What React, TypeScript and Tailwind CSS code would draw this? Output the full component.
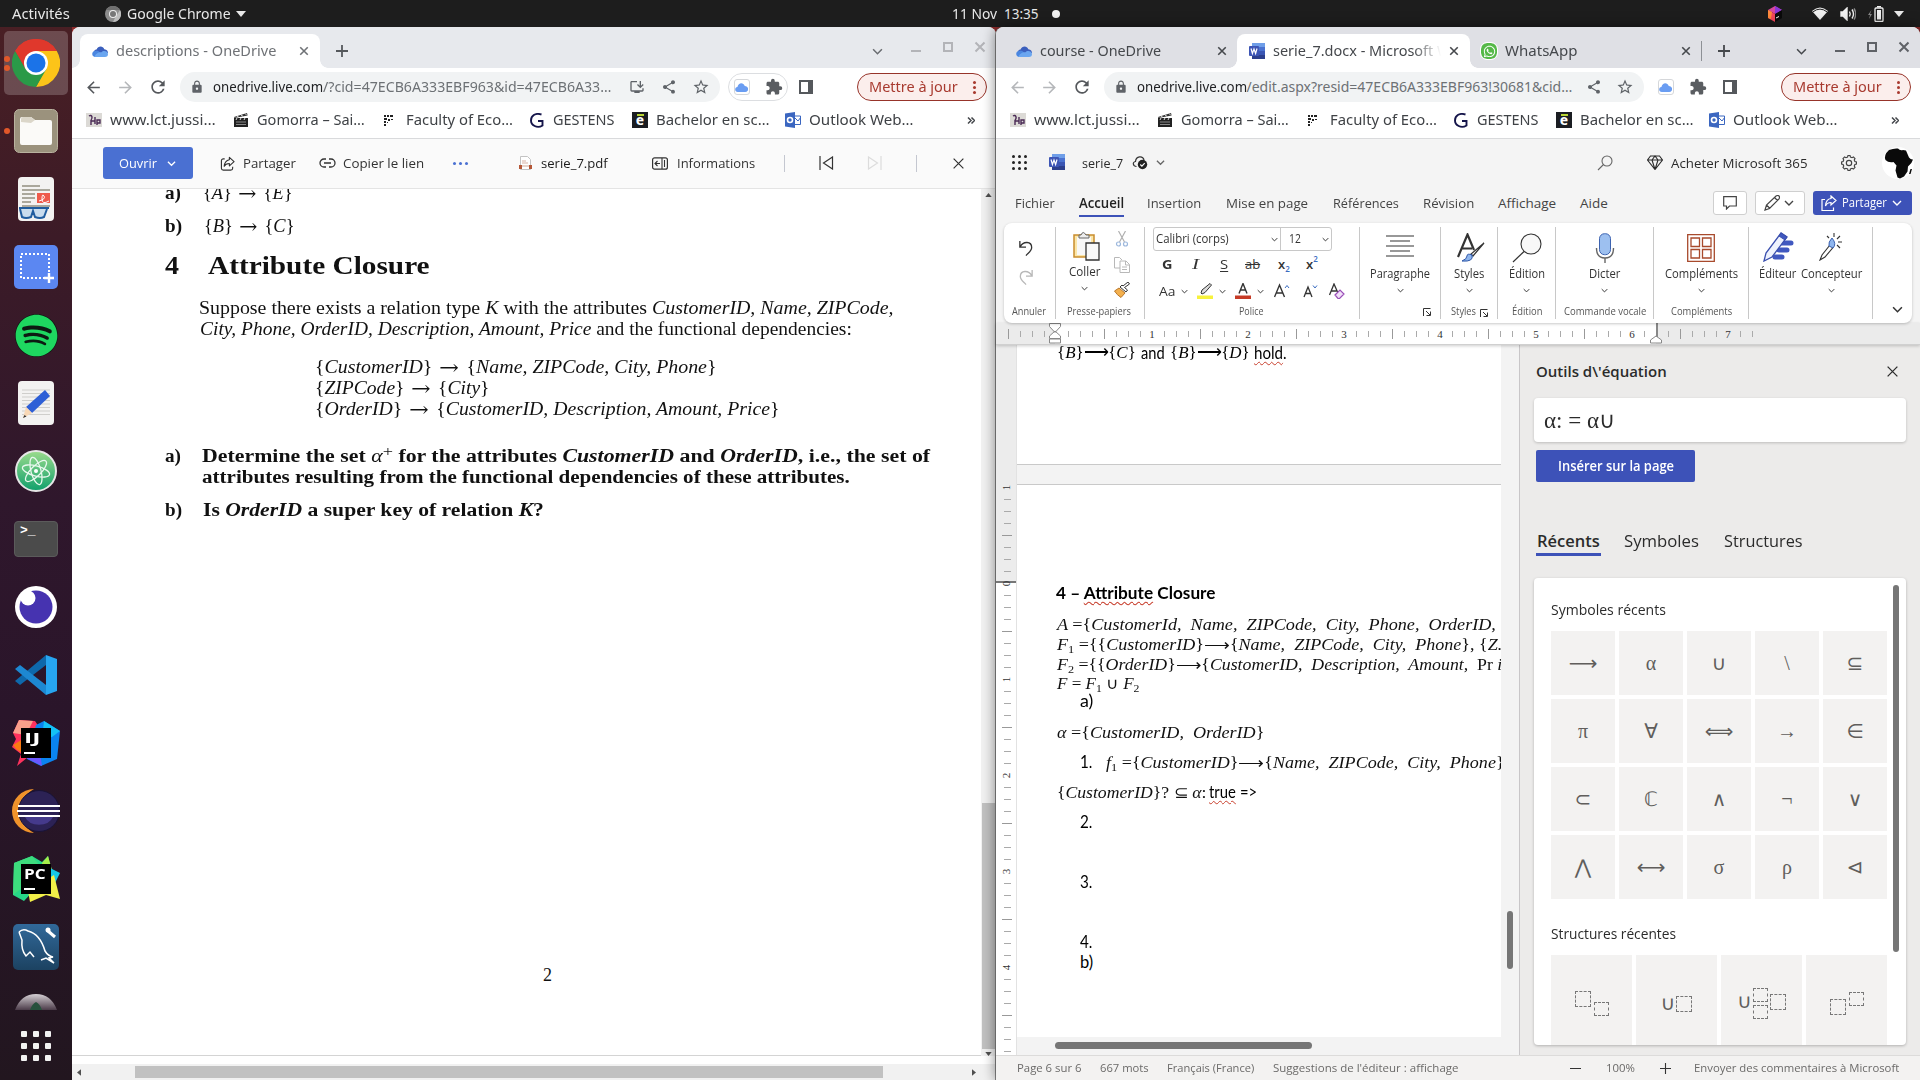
import { useLayoutEffect, useRef } from "react";
import type { ReactNode } from "react";
import {
  MdArrowBack,
  MdArrowForward,
  MdExtension,
  MdLock,
  MdOutlineInstallDesktop,
  MdRefresh,
  MdShare,
  MdStarBorder,
} from "react-icons/md";
import { FaWhatsapp, FaSpotify } from "react-icons/fa";

/* Text that is stretched horizontally to fill the width given by its class. */
function Fit({ className = "", children }: { className?: string; children: ReactNode }) {
  const outer = useRef<HTMLSpanElement>(null);
  const inner = useRef<HTMLSpanElement>(null);
  useLayoutEffect(() => {
    if (!outer.current || !inner.current) return;
    const scale = outer.current.clientWidth / inner.current.offsetWidth;
    inner.current.style.transform = `scaleX(${scale})`;
  });
  return (
    <span ref={outer} className={`block shrink-0 whitespace-pre ${className}`}>
      <span ref={inner} className="inline-block origin-left align-top">
        {children}
      </span>
    </span>
  );
}

function Svg({ box, className, children }: { box: string; className: string; children: ReactNode }) {
  return (
    <svg viewBox={box} className={`block shrink-0 ${className}`} fill="none" stroke="currentColor">
      {children}
    </svg>
  );
}

const Chevron = ({ className = "" }: { className?: string }) => (
  <Svg box="0 0 10 10" className={className}>
    <path d="M1 3l4 4 4-4" strokeWidth="1.4" />
  </Svg>
);
const Cross = ({ className = "", sw = 1.6 }: { className?: string; sw?: number }) => (
  <Svg box="0 0 12 12" className={className}>
    <path d="M1.5 1.5l9 9M10.5 1.5l-9 9" strokeWidth={sw} />
  </Svg>
);
const Plus = ({ className = "", sw = 1.8 }: { className?: string; sw?: number }) => (
  <Svg box="0 0 12 12" className={className}>
    <path d="M6 0v12M0 6h12" strokeWidth={sw} />
  </Svg>
);
const Cloud = ({ className = "" }: { className?: string }) => (
  <svg viewBox="0 0 16 11" className={`block shrink-0 ${className}`}>
    <path d="M4 9C1 8 1 4 4.500 3.500 6-.5 11-.7 12.300 3.200 15 3.500 16 5 16 7L8 9z" fill="#3b5fbd" />
    <path d="M3.500 11C-.5 11-1 5.500 3 5c2-.5 3 0 5 1.200L3.500 11z" fill="#4a86e0" />
    <path d="M2.500 11C3 8 6.500 5.800 9.500 6.200 11 4 15.900 4.800 16 8c0 2-1 3-3 3z" fill="#6aa6f0" />
  </svg>
);
const WordIcon = () => (
  <svg viewBox="0 0 16 16" className="block h-4 w-4 shrink-0">
    <path d="M3 0h13v4H3z" fill="#6f9ee8" />
    <path d="M3 4h13v4H3z" fill="#4a72d0" />
    <path d="M3 8h13v4H3z" fill="#3a56b4" />
    <path d="M3 12h13v4H3z" fill="#2c3f8c" />
    <rect y="3" width="10" height="10" rx="1" fill="#3d55b5" />
    <path d="M2 5.500l1.400 5L5 6l1.600 4.500L8 5.500" stroke="#fff" strokeWidth="1.200" fill="none" />
  </svg>
);

/* ───────── Desktop top bar ───────── */
function TopBar() {
  return (
    <div className="flex h-[27px] shrink-0 items-center bg-[#1d1d1d] font-['Noto_Sans',sans-serif] text-[13.5px] leading-5 text-[#e8e8e8]">
      <Fit className="ml-[12px] w-[58px]">Activités</Fit>
      <svg viewBox="0 0 16 16" className="ml-[35px] h-4 w-4">
        <circle cx="8" cy="8" r="8" fill="#8d8d8d" />
        <path d="M1 4a8 8 0 0 1 14 0H8z" fill="#6f6f6f" />
        <path d="M15 4a8 8 0 0 1-7 12l3-6z" fill="#bdbdbd" />
        <circle cx="8" cy="8" r="4" fill="#eee" />
        <circle cx="8" cy="8" r="3" fill="#777" />
      </svg>
      <Fit className="ml-[6px] w-[104px]">Google Chrome</Fit>
      <svg viewBox="0 0 10 6" className="ml-[5px] h-[6px] w-[10px]" fill="#e8e8e8"><path d="M0 0h10L5 6z" /></svg>
      <Fit className="ml-[706px] w-[45px]">11 Nov</Fit>
      <Fit className="ml-[7px] w-[35px]">13:35</Fit>
      <span className="ml-[13px] h-2 w-2 rounded-full bg-[#f2f2f2]" />
      <svg viewBox="0 0 14 16" className="ml-[708px] h-4 w-[14px]">
        <path d="M7 0L0 4l7 4 7-4z" fill="#d8479c" />
        <path d="M0 4v8l7 4V8z" fill="#f5465b" />
        <path d="M0 4l4 2-1 7-3-1z" fill="#ff8a3c" />
        <path d="M7 0l7 4-7 4z" fill="#8a36d8" />
        <path d="M7 8l7-4v8l-7 4z" fill="#0a0a0a" />
        <path d="M8 12l3-1.500" stroke="#fff" />
      </svg>
      <svg viewBox="0 0 16 13" className="ml-[30px] h-[13px] w-4">
        <path d="M0 4Q8-3 16 4L8 13z" fill="#f0f0f0" />
        <path d="M.8 5Q8-.8 15.200 5" stroke="#1d1d1d" fill="none" strokeWidth="1" />
      </svg>
      <svg viewBox="0 0 16 14" className="ml-[12px] h-[14px] w-4" fill="none" stroke="#f0f0f0" strokeWidth="1.400">
        <path d="M1 5h2l4-4v12L3 9H1z" fill="#f0f0f0" />
        <path d="M9.500 4.500q1.500 2.500 0 5M12 2.500q3 4.500 0 9" />
        <path d="M14 1.500q3.500 5.500 0 11" stroke="#888" />
      </svg>
      <svg viewBox="0 0 16 16" className="ml-[12px] h-4 w-4">
        <path d="M3.500 4L0 9h2l-1 4 3-5H2z" fill="#888" />
        <rect x="7" y="2" width="8" height="13.500" rx="1" fill="none" stroke="#f0f0f0" strokeWidth="1.300" />
        <rect x="9" y="4" width="4" height="9.500" fill="#f0f0f0" />
        <path d="M9 .7h4" stroke="#f0f0f0" strokeWidth="1.400" />
      </svg>
      <svg viewBox="0 0 10 6" className="ml-[10px] h-[6px] w-[10px]" fill="#e8e8e8"><path d="M0 0h10L5 6z" /></svg>
    </div>
  );
}

/* ───────── Dock ───────── */
function Slot({ children, dots = 0, active = false }: { children: ReactNode; dots?: number; active?: boolean }) {
  return (
    <div className="relative flex h-[68px] w-[72px] shrink-0 items-center justify-center">
      {active && <span className="absolute inset-x-[4px] inset-y-[2px] rounded-[5px] bg-white/20" />}
      <div className="absolute left-[4px] flex flex-col gap-[3px]">
        {Array.from({ length: dots }, (_, i) => (
          <span key={i} className="h-[6px] w-[6px] rounded-full bg-[#e2582a]" />
        ))}
      </div>
      <div className="relative">{children}</div>
    </div>
  );
}

function JetBrains({ code, pc }: { code: string; pc?: boolean }) {
  return (
    <div className="relative flex h-[48px] w-[48px] items-center justify-center">
      {pc ? (
        <svg viewBox="0 0 48 48" className="absolute inset-0">
          <path d="M2 8L20 1l10 6 6-6 4 16-14 14L12 46 1 40z" fill="#27d787" />
          <path d="M2 8L20 1l8 10-18 22L1 40z" fill="#3ddc7d" />
          <path d="M30 8l6-7 4 14-8 6z" fill="#a6ee4a" />
          <path d="M36 12l12 6-6 12-6-4z" fill="#16c8e8" />
          <path d="M16 36l26-16 6 24-14-4-16 7z" fill="#f2f048" />
        </svg>
      ) : (
        <svg viewBox="0 0 48 48" className="absolute inset-0">
          <path d="M7 1l16 1 8 12-10 20L5 47l4-12-9-7 4-8-3-6z" fill="#fe315d" />
          <path d="M7 1l14 1-7 14-13-2z" fill="#f9a08b" />
          <path d="M1 26l10-6 2 16-9-6z" fill="#f97a12" />
          <path d="M24 6l8-4 16 10-3 28-16 7-14-7z" fill="#0a84f0" />
          <path d="M32 2l16 10-8 6-10 2z" fill="#14c2f5" />
          <path d="M12 38l16-4 2 13z" fill="#6b57ff" />
        </svg>
      )}
      <div className="relative flex h-[30px] w-[30px] flex-col justify-between bg-black px-[3px] pb-[4px] pt-[3px]">
        <Fit className={`font-['Open_Sans',sans-serif] text-[14px] font-bold leading-[14px] text-white ${pc ? "w-[22px]" : "w-[16px]"}`}>{code}</Fit>
        <span className="h-[2px] w-[11px] bg-white" />
      </div>
    </div>
  );
}

function Dock() {
  return (
    <div className="flex w-[72px] shrink-0 flex-col overflow-hidden bg-[linear-gradient(180deg,#491f24_0%,#3c1b27_20%,#2f172c_45%,#2a152a_65%,#22161f_100%)] pt-[2px]">
      <Slot active dots={2}>
        <svg viewBox="0 0 48 48" className="h-12 w-12">
          <path d="M24 24L3.200 12A24 24 0 0 1 44.800 12z" fill="#e0382c" />
          <path d="M24 12h20.800A24 24 0 0 1 24 48L34 29z" fill="#fcc419" />
          <path d="M3.200 12A24 24 0 0 0 24 48l10.400-18L24 24 13.600 30z" fill="#2a9a48" />
          <path d="M24 12h20.800A24 24 0 0 0 3.200 12L13.600 30 14 18z" fill="#e0382c" />
          <circle cx="24" cy="24" r="12" fill="#fff" />
          <circle cx="24" cy="24" r="9.500" fill="#1b73e8" />
        </svg>
      </Slot>
      <Slot dots={1}>
        <svg viewBox="0 0 44 44" className="h-11 w-11">
          <rect x=".5" y=".5" width="43" height="43" rx="5" fill="#9b927d" stroke="#b9b29f" />
          <path d="M6 34V10q0-2 2-2h9l4 3h15q2 0 2 2v21q0 2-2 2H8q-2 0-2-2z" fill="#fbfaf8" />
          <path d="M7 13v-3q0-2 2-2h8l4 3-4 3z" fill="#dbd6c9" />
        </svg>
      </Slot>
      <Slot>
        <svg viewBox="0 0 36 44" className="h-11 w-9">
          <rect width="36" height="44" rx="4" fill="#f3f2f1" />
          <path d="M4 9h18M4 13h28M4 17h13M4 21h13M4 25h9M4 29h28" stroke="#aaa79c" strokeWidth="2" />
          <rect x="19" y="16" width="13" height="10" fill="#ee5a4c" />
          <path d="M21 24q7-2 5-5t-2 3 7 2" stroke="#fff" fill="none" />
          <path d="M1 31h30M2 32l2 8q4 2 9 0l2-6 2 6q5 2 9 0l3-8" stroke="#1f5c9e" strokeWidth="2" fill="#c9dced" />
        </svg>
      </Slot>
      <Slot>
        <svg viewBox="0 0 44 44" className="h-11 w-11">
          <rect width="44" height="44" rx="5" fill="#5b87f2" />
          <rect x="7" y="9" width="28" height="24" fill="none" stroke="#fff" strokeWidth="2" strokeDasharray="2 2" />
          <path d="M35 28v10M30 33h10" stroke="#fff" strokeWidth="2.400" />
        </svg>
      </Slot>
      <Slot>
        <div className="rounded-full bg-[#0d1a12]"><FaSpotify className="h-[43px] w-[43px] text-[#1ed760]" /></div>
      </Slot>
      <Slot>
        <svg viewBox="0 0 36 44" className="h-11 w-9">
          <rect width="36" height="44" rx="4" fill="#f3f2f1" />
          <path d="M4 9h28M4 12.500h28M4 16h28M4 19.500h28M4 23h28M4 26.500h28M4 30h28M4 33.500h28" stroke="#cfcecb" />
          <path d="M27 9l5 6-18 17-6-6z" fill="#2e5fd6" />
          <path d="M8 26l6 6-9 5z" fill="#f8d7b5" />
          <path d="M5 37l1.500-3 2 1.500z" fill="#333" />
        </svg>
      </Slot>
      <Slot>
        <svg viewBox="0 0 44 44" className="h-[44px] w-[44px]">
          <defs><linearGradient id="atom" x2="0" y2="1"><stop stopColor="#9bdc8c" /><stop offset="1" stopColor="#10a06c" /></linearGradient></defs>
          <circle cx="22" cy="22" r="20" fill="url(#atom)" stroke="#e6e6e6" strokeWidth="2" />
          <g fill="none" stroke="#e9f8ee" strokeWidth="1.300">
            <ellipse cx="22" cy="22" rx="14" ry="5" transform="rotate(15 22 22)" />
            <ellipse cx="22" cy="22" rx="14" ry="5" transform="rotate(75 22 22)" />
            <ellipse cx="22" cy="22" rx="14" ry="5" transform="rotate(-45 22 22)" />
          </g>
          <circle cx="22" cy="22" r="2" fill="#fff" />
        </svg>
      </Slot>
      <Slot>
        <div className="h-9 w-11 rounded-[4px] border border-[#5b5b5b] bg-[#4b4b4b] pl-[5px] font-['Liberation_Mono',monospace] text-[13px] font-bold leading-[17px] text-white">{">_"}</div>
      </Slot>
      <Slot>
        <svg viewBox="0 0 42 42" className="h-[42px] w-[42px]">
          <circle cx="21" cy="21" r="21" fill="#fff" />
          <circle cx="21" cy="21" r="16.500" fill="#4633b0" />
          <circle cx="13" cy="12" r="7.500" fill="#fff" />
        </svg>
      </Slot>
      <Slot>
        <svg viewBox="0 0 42 42" className="h-[42px] w-[42px]">
          <path d="M0 27l31-26v10L5 31z" fill="#0e68ab" />
          <path d="M0 15l5-4 26 20v10z" fill="#1d88d2" />
          <path d="M31 1l11 4v32l-11 4z" fill="#27a5f0" />
        </svg>
      </Slot>
      <Slot><JetBrains code="IJ" /></Slot>
      <Slot>
        <svg viewBox="0 0 48 44" className="h-11 w-12">
          <path d="M22 0A22 22 0 0 0 22 44Q8 36 8 22T22 0z" fill="#f0932b" />
          <circle cx="27" cy="22" r="20.500" fill="#2c2255" stroke="#191336" />
          <path d="M13 28a15 12 0 0 0 28 0z" fill="#453a8c" />
          <path d="M6 17h42M5 22h43M6 27h42" stroke="#fff" strokeWidth="2.200" />
        </svg>
      </Slot>
      <Slot><JetBrains code="PC" pc /></Slot>
      <Slot>
        <svg viewBox="0 0 46 46" className="h-[46px] w-[46px]">
          <defs><linearGradient id="dolphin" x2="0" y2="1"><stop stopColor="#31699a" /><stop offset="1" stopColor="#1c4261" /></linearGradient></defs>
          <rect width="46" height="46" rx="5" fill="url(#dolphin)" />
          <path d="M6 8q4-4 9-1 12 3 17 20 3 5 8 6l-4 1 5 5-8-5-5 2M21 33l-4-5-4 4Q8 26 9 16L6 8" fill="none" stroke="#fff" strokeWidth="1.500" />
          <path d="M35 7l7 6" stroke="#fff" strokeWidth="3" />
          <circle cx="35" cy="6" r="2.500" fill="#fff" />
        </svg>
      </Slot>
      <div className="mt-[13px] flex h-[16px] justify-center overflow-hidden">
        <svg viewBox="0 0 42 16" className="h-4 w-[42px]">
          <defs><linearGradient id="fade" x2="0" y2="1"><stop stopColor="#d5d0d4" /><stop offset="1" stopColor="#4b3b49" /></linearGradient></defs>
          <path d="M0 16Q6 0 21 0t21 16z" fill="url(#fade)" />
          <path d="M15 16q2-6 6-8 4 2 6 8z" fill="#27513d" />
        </svg>
      </div>
      <div className="mt-[21px] grid grid-cols-[6px_6px_6px] justify-center gap-[6px]">
        {Array.from({ length: 9 }, (_, i) => <span key={i} className="h-[6px] w-[6px] rounded-[1px] bg-[#f2f2f2]" />)}
      </div>
    </div>
  );
}

/* ───────── Browser chrome ───────── */
function Flare() {
  return (
    <>
      <span className="absolute -left-2 bottom-0 h-2 w-2 bg-[radial-gradient(circle_at_0_0,transparent_7.5px,white_8px)]" />
      <span className="absolute -right-2 bottom-0 h-2 w-2 bg-[radial-gradient(circle_at_100%_0,transparent_7.5px,white_8px)]" />
    </>
  );
}

function WinButtons() {
  return (
    <>
      <span className="h-[2px] w-[10px] shrink-0 bg-current" />
      <span className="mb-[8px] ml-[22px] h-[10px] w-[10px] shrink-0 border-2 border-current" />
      <Cross className="mb-[8px] ml-[21px] h-[12px] w-[12px]" sw={2} />
    </>
  );
}

function CloudBadge() {
  return (
    <span className="flex h-4 w-4 shrink-0 items-center justify-center rounded-[3px] border border-[#d5d7da] bg-white">
      <svg viewBox="0 0 16 11" className="h-[9px] w-[13px]"><path d="M3.500 11C-.5 11-1 5.500 3 5 4-.5 10-1.500 12 3.500c4 0 5 4 3.500 6q-1 1.500-3 1.500z" fill="#6a9df2" /></svg>
    </span>
  );
}

function AddressBar({ second }: { second?: boolean }) {
  return (
    <div className="flex h-[38px] shrink-0 items-center bg-white font-['Noto_Sans',sans-serif] text-[14px] leading-5">
      <MdArrowBack className={`ml-[12px] h-[19px] w-[19px] shrink-0 ${second ? "text-[#b5b7ba]" : "text-[#55585c]"}`} />
      <MdArrowForward className="ml-[13px] h-[19px] w-[19px] shrink-0 text-[#b5b7ba]" />
      <MdRefresh className="ml-[12.5px] h-[20px] w-[20px] shrink-0 text-[#55585c]" />
      <div className="ml-[12px] flex h-[30px] w-[540px] shrink-0 items-center rounded-full bg-[#f1f3f4] text-[#5f6368]">
        <MdLock className="ml-[10px] h-[14px] w-[14px] shrink-0" />
        <Fit className="ml-[9px] w-[110px] text-[#202124]">onedrive.live.com</Fit>
        {second ? (
          <>
            <Fit className="w-[326px] text-[#6d7175]">/edit.aspx?resid=47ECB6A333EBF963!30681&cid…</Fit>
            <MdShare className="ml-[13px] h-[16px] w-[16px] shrink-0" />
            <MdStarBorder className="ml-[14px] h-[18px] w-[18px] shrink-0" />
          </>
        ) : (
          <>
            <Fit className="w-[288px] text-[#6d7175]">/?cid=47ECB6A333EBF963&id=47ECB6A33…</Fit>
            <MdOutlineInstallDesktop className="ml-[18px] h-[16px] w-[16px] shrink-0" />
            <MdShare className="ml-[16px] h-[16px] w-[16px] shrink-0" />
            <MdStarBorder className="ml-[15px] h-[18px] w-[18px] shrink-0" />
          </>
        )}
      </div>
      {second ? (
        <div className="ml-[14px] flex h-[28px] w-[54px] shrink-0 items-center gap-[15px]">
          <CloudBadge />
          <MdExtension className="h-[18px] w-[18px] text-[#5a5d61]" />
        </div>
      ) : (
        <div className="ml-[8px] flex h-[28px] w-[60px] shrink-0 items-center gap-[15px] rounded-full border border-[#dcdee1] pl-[5px]">
          <CloudBadge />
          <MdExtension className="h-[18px] w-[18px] text-[#5a5d61]" />
        </div>
      )}
      <span className="ml-[11px] h-[14px] w-[14px] shrink-0 border-2 border-r-[5px] border-[#55585c]" />
      <div className="ml-[44px] flex h-[28px] w-[130px] shrink-0 items-center rounded-full border border-[#97342a] bg-[#fbeeec] text-[#a83a2f]">
        <Fit className="ml-[11px] w-[89px]">Mettre à jour</Fit>
        <div className="ml-[15px] flex flex-col gap-[2px]">
          <span className="h-[3px] w-[3px] rounded-full bg-current" />
          <span className="h-[3px] w-[3px] rounded-full bg-current" />
          <span className="h-[3px] w-[3px] rounded-full bg-current" />
        </div>
      </div>
    </div>
  );
}

function Bookmarks() {
  return (
    <div className="flex h-[33px] shrink-0 items-center border-b border-[#d9dadc] bg-white pb-[4px] font-['Noto_Sans',sans-serif] text-[14px] leading-5 text-[#3f4246]">
      <Svg box="0 0 16 14" className="ml-[14px] h-[14px] w-4 bg-[#dcdad6] text-[#4a2a55]">
        <path d="M3 3c3-2 4 2 2 4M5 7v5M5 8h4M9 4v7M11 12V7h3v3h-3" strokeWidth="1.400" />
      </Svg>
      <Fit className="ml-[8px] w-[106px]">www.lct.jussi…</Fit>
      <svg viewBox="0 0 16 16" className="ml-[17px] h-4 w-4 shrink-0">
        <path d="M1 6h14v9H1z" fill="#222" />
        <path d="M1 5l13-4 .6 2.500L1.500 6z" fill="#333" />
        <path d="M4 4l2 1.500M8 3l2 1.300M12 1.500l1.500 1.500M4 6l-1 2M8 6L7 8M12 6l-1 2" stroke="#ddd" />
        <path d="M3 10h10M3 12.500h10" stroke="#888" />
      </svg>
      <Fit className="ml-[8px] w-[108px]">Gomorra – Sai…</Fit>
      <svg viewBox="0 0 10 11" className="ml-[19px] h-[11px] w-[10px] shrink-0" fill="#222">
        <path d="M0 0h2v2H0zM3 0h2v2H3zM6 0h3v2H6zM0 3h3v2H0zM4 4h2v2H4zM7 4h2v1H7zM0 6h2v2H0zM3 7h1v1H3zM0 9h2v2H0z" />
      </svg>
      <Fit className="ml-[12px] w-[107px]">Faculty of Eco…</Fit>
      <Svg box="0 0 14 15" className="ml-[17px] h-[15px] w-[14px] text-[#15154a]">
        <path d="M11.500 1.500C5-.5 1 3 1 7.500s6 8.500 11.500 5V8H8" strokeWidth="1.900" />
      </Svg>
      <Fit className="ml-[9px] w-[62px]">GESTENS</Fit>
      <span className="relative ml-[17px] flex h-4 w-4 shrink-0 items-center justify-center bg-[#1b1d22] text-[14px] font-bold leading-none text-white">
        <span className="absolute top-[2px] h-[2px] w-[7px] bg-[#b8d432]" />
        e
      </span>
      <Fit className="ml-[8px] w-[113px]">Bachelor en sc…</Fit>
      <svg viewBox="0 0 16 16" className="ml-[16px] h-4 w-4 shrink-0">
        <path d="M0 1.500L10 0v16L0 14.500z" fill="#3b66c0" />
        <path d="M10 4h5.500v8.500H10M10 6l3 3 3-4" fill="none" stroke="#3b66c0" />
        <circle cx="5" cy="8" r="2.500" fill="none" stroke="#fff" strokeWidth="1.600" />
      </svg>
      <Fit className="ml-[8px] w-[105px]">Outlook Web…</Fit>
      <Svg box="0 0 8 7" className="ml-[53px] h-[7px] w-[8px] text-[#44474b]">
        <path d="M1 .5l3 3-3 3M4.500.5l3 3-3 3" strokeWidth="1.500" />
      </Svg>
    </div>
  );
}

/* ───────── Left window: PDF viewer ───────── */
const To = () => <span className="font-['DejaVu_Math_TeX_Gyre','DejaVu_Serif',serif] text-[19px] leading-none"> → </span>;

function PdfWindow() {
  return (
    <div className="flex w-[924px] shrink-0 flex-col overflow-hidden rounded-t-[8px] bg-white">
      <div className="flex h-[41px] shrink-0 items-center bg-[#e7e9ed] pt-[7px] font-['Noto_Sans',sans-serif] text-[14px] leading-5">
        <div className="relative ml-[8px] flex h-[34px] w-[240px] shrink-0 items-center rounded-t-[8px] bg-white text-[#6f7276]">
          <Flare />
          <Cloud className="ml-[12px] h-[11px] w-4" />
          <Fit className="ml-[8px] w-[160px]">descriptions - OneDrive</Fit>
          <Cross className="ml-[23px] h-[10px] w-[10px]" sw={1.9} />
        </div>
        <Plus className="ml-[16px] h-[12px] w-[12px] text-[#55585c]" />
        <Chevron className="ml-[524px] h-[11px] w-[11px] text-[#6a6d71]" />
        <div className="ml-[28px] flex items-center text-[#b3b4b8]"><WinButtons /></div>
      </div>
      <AddressBar />
      <Bookmarks />
      <div className="flex h-[50px] shrink-0 items-center border-b border-[#e4e4e4] bg-[#fafafa] pb-px font-['Open_Sans',sans-serif] text-[13.5px] leading-5 text-[#333]">
        <div className="ml-[31px] flex h-8 w-[90px] shrink-0 items-center rounded-[3px] bg-[#4a70d2] text-white">
          <Fit className="ml-[16px] w-[38px]">Ouvrir</Fit>
          <Chevron className="ml-[10px] h-[9px] w-[9px]" />
        </div>
        <Svg box="0 0 16 16" className="ml-[27px] h-[15px] w-[15px]">
          <path d="M5 3H3.500A2 2 0 0 0 1.500 5v8a2 2 0 0 0 2 2h8a2 2 0 0 0 2-2v-1.500M10 1.500l5 4.500-5 4.500V8Q6 8 4.500 11 5 5 10 4z" strokeWidth="1.200" strokeLinejoin="round" />
        </Svg>
        <Fit className="ml-[8px] w-[53px]">Partager</Fit>
        <Svg box="0 0 17 10" className="ml-[23px] h-[10px] w-[17px]">
          <path d="M7 1H5a4 4 0 0 0 0 8h2M10 1h2a4 4 0 0 1 0 8h-2M5 5h7" strokeWidth="1.300" />
        </Svg>
        <Fit className="ml-[7px] w-[81px]">Copier le lien</Fit>
        <div className="ml-[29px] flex gap-[3px]">
          <span className="h-[3px] w-[3px] rounded-full bg-[#4a70d2]" />
          <span className="h-[3px] w-[3px] rounded-full bg-[#4a70d2]" />
          <span className="h-[3px] w-[3px] rounded-full bg-[#4a70d2]" />
        </div>
        <svg viewBox="0 0 13 14" className="ml-[51px] h-[14px] w-[13px] shrink-0">
          <path d="M1.500.5h7l3 3v10h-10z" fill="#fff" stroke="#c3c3c3" />
          <path d="M3 5h4M3 7h6" stroke="#d9b3a5" />
          <path d="M0 9h3v4H0zM10 9h3v4h-3z" fill="#b65838" />
          <path d="M3 9h7v2H3z" fill="#e8d4cb" />
        </svg>
        <Fit className="ml-[9px] w-[67px] text-[#1c1c1c]">serie_7.pdf</Fit>
        <Svg box="0 0 16 13" className="ml-[44px] h-[13px] w-4">
          <rect x=".6" y=".8" width="14.800" height="11.400" rx="2" strokeWidth="1.200" />
          <path d="M10 1v11M3 6.500h5M5.500 4L3 6.500 5.500 9M12.500 3v7" strokeWidth="1.100" />
        </Svg>
        <Fit className="ml-[9px] w-[78px]">Informations</Fit>
        <span className="ml-[29px] h-[17px] w-px bg-[#c4c7d0]" />
        <Svg box="0 0 15 14" className="ml-[34px] h-[14px] w-[15px]"><path d="M1 0v14M13.500 1v12L4.500 7z" strokeWidth="1.200" /></Svg>
        <Svg box="0 0 15 14" className="ml-[33px] h-[14px] w-[15px] text-[#dcdcdc]"><path d="M14 0v14M1.500 1v12l9-6z" strokeWidth="1.200" /></Svg>
        <span className="ml-[34px] h-[17px] w-px bg-[#c4c7d0]" />
        <Cross className="ml-[35px] h-[13px] w-[13px]" sw={1.1} />
      </div>
      <div className="flex h-[867px] shrink-0 overflow-hidden">
        <div className="w-[909px] shrink-0 border-b border-[#d4d4d4] pl-[93px] font-['Liberation_Serif',serif] text-[18px] leading-[21px] text-[#111]">
          <div className="-mt-[6px] flex h-[21px]">
            <Fit className="w-[16px] font-bold">a)</Fit>
            <Fit className="ml-[22px] w-[89px]">{"{"}<i>A</i>{"}"}<To />{"{"}<i>E</i>{"}"}</Fit>
          </div>
          <div className="mt-[12px] flex h-[21px]">
            <Fit className="w-[17px] font-bold">b)</Fit>
            <Fit className="ml-[22px] w-[90px]">{"{"}<i>B</i>{"}"}<To />{"{"}<i>C</i>{"}"}</Fit>
          </div>
          <div className="mt-[12px] flex h-[34px] text-[26px] font-bold leading-[34px]">
            <Fit className="w-[14px]">4</Fit>
            <Fit className="ml-[29px] w-[222px]">Attribute Closure</Fit>
          </div>
          <div className="ml-[34px] mt-[15px]">
            <Fit className="w-[694px]">Suppose there exists a relation type <i>K</i> with the attributes <i>CustomerID, Name, ZIPCode,</i></Fit>
            <Fit className="ml-px w-[652px]"><i>City, Phone, OrderID, Description, Amount, Price</i> and the functional dependencies:</Fit>
          </div>
          <div className="ml-[150px] mt-[17px]">
            <Fit className="w-[401px]">{"{"}<i>CustomerID</i>{"}"}<To />{"{"}<i>Name, ZIPCode, City, Phone</i>{"}"}</Fit>
            <Fit className="w-[174px]">{"{"}<i>ZIPCode</i>{"}"}<To />{"{"}<i>City</i>{"}"}</Fit>
            <Fit className="w-[464px]">{"{"}<i>OrderID</i>{"}"}<To />{"{"}<i>CustomerID, Description, Amount, Price</i>{"}"}</Fit>
          </div>
          <div className="mt-[26px] flex font-bold">
            <Fit className="w-[16px]">a)</Fit>
            <div className="ml-[21px]">
              <Fit className="w-[728px]">Determine the set <i className="font-normal">α</i><sup className="relative -top-[6px] align-baseline text-[15px] font-normal leading-none">+</sup> for the attributes <i>CustomerID</i> and <i>OrderID</i>, i.e., the set of</Fit>
              <Fit className="w-[648px]">attributes resulting from the functional dependencies of these attributes.</Fit>
            </div>
          </div>
          <div className="mt-[12px] flex font-bold">
            <Fit className="w-[17px]">b)</Fit>
            <Fit className="ml-[21px] w-[341px]">Is <i>OrderID</i> a super key of relation <i>K</i>?</Fit>
          </div>
          <div className="mt-[444px] pl-[378px]">2</div>
        </div>
        <div className="flex w-[15px] shrink-0 flex-col items-center bg-[#f1f1f1]">
          <svg viewBox="0 0 8 5" className="mt-[4px] h-[4px] w-[7px]" fill="#505050"><path d="M0 5l4-5 4 5z" /></svg>
          <span className="mt-[606px] h-[247px] w-[13px] bg-[#c1c1c1]" />
          <svg viewBox="0 0 8 5" className="mt-[3px] h-[4px] w-[7px]" fill="#505050"><path d="M0 0l4 5 4-5z" /></svg>
        </div>
      </div>
      <div className="flex h-[24px] shrink-0 flex-col justify-end">
        <div className="flex h-[16px] items-center bg-[#f1f1f1]">
          <svg viewBox="0 0 5 8" className="ml-[5px] h-[7px] w-[4px]" fill="#505050"><path d="M5 0L0 4l5 4z" /></svg>
          <span className="ml-[54px] h-[12px] w-[748px] bg-[#c1c1c1]" />
          <svg viewBox="0 0 5 8" className="ml-[89px] h-[7px] w-[4px]" fill="#505050"><path d="M0 0l5 4-5 4z" /></svg>
        </div>
      </div>
    </div>
  );
}

/* ───────── Right window: Word ───────── */
function WordHeader() {
  return (
    <div className="flex h-[48px] shrink-0 items-center pb-px font-['Open_Sans',sans-serif] text-[13.5px] leading-5 text-[#2b2b2b]">
      <div className="ml-[16px] grid grid-cols-[3px_3px_3px] gap-[3px]">
        {Array.from({ length: 9 }, (_, i) => <span key={i} className="h-[3px] w-[3px] rounded-full bg-[#222]" />)}
      </div>
      <span className="mb-px ml-[22px]"><WordIcon /></span>
      <Fit className="ml-[17px] w-[41px]">serie_7</Fit>
      <svg viewBox="0 0 16 14" className="ml-[9px] h-[14px] w-4 shrink-0" fill="none">
        <path d="M4.500 10.500C1 10.500 0 6 3.500 5.500 4-.5 11-.5 12 4" stroke="#333" strokeWidth="1.200" />
        <circle cx="10.500" cy="8.500" r="4.700" fill="#222" />
        <path d="M8.300 8.500l1.600 1.600 2.800-3" stroke="#fff" strokeWidth="1.100" />
      </svg>
      <Chevron className="ml-[8px] h-[9px] w-[9px] text-[#666]" />
      <Svg box="0 0 16 16" className="ml-[432px] h-[16px] w-[16px] text-[#666]">
        <circle cx="10" cy="6" r="5" strokeWidth="1.100" /><path d="M6.500 9.500L1 15" strokeWidth="1.100" />
      </Svg>
      <Svg box="0 0 16 15" className="ml-[34px] h-[15px] w-4">
        <path d="M3.500 1h9L15.500 5 8 14.500.5 5zM.5 5h15M5 5l3 9.500L11 5M5 5l3-4 3 4" strokeWidth="1.100" />
      </Svg>
      <Fit className="ml-[8px] w-[137px] text-[13.5px]">Acheter Microsoft 365</Fit>
      <Svg box="0 0 24 24" className="ml-[31px] h-[20px] w-[20px] text-[#444]">
        <circle cx="12" cy="12" r="3.200" strokeWidth="1.400" />
        <path d="M10.300 3.300l.5-1.800h2.400l.5 1.800 1.900.8 1.700-.9 1.900 1.900-.9 1.700.8 1.900 1.800.5v2.600l-1.800.5-.8 1.900.9 1.700-1.900 1.900-1.700-.9-1.900.8-.5 1.800h-2.400l-.5-1.800-1.900-.8-1.700.9-1.900-1.900.9-1.700-.8-1.900-1.800-.5V9.200l1.800-.5.8-1.900-.9-1.700 1.900-1.900 1.700.9z" strokeWidth="1.400" transform="translate(0 1.500)" />
      </Svg>
      <svg viewBox="0 0 32 32" className="ml-[23px] h-8 w-8 shrink-0">
        <circle cx="16" cy="16" r="16" fill="#fff" />
        <path d="M7 3q5-2 9-1.500 2 2.500 5 1.500l3 .5 3 7q2 2.500 4 2-1 4-5 7l-.5 5-3.500 5-4 2-2.500-1-2-7 1-5-3-3.500q-5 1-8-2-2-5 3.500-10z" fill="#0a0a0a" />
        <path d="M28.500 22l-1.500 5h1.500l1.500-5z" fill="#0a0a0a" />
      </svg>
    </div>
  );
}

function WordTabs() {
  return (
    <div className="flex h-[36px] shrink-0 items-start font-['Open_Sans',sans-serif] text-[13.5px] leading-[33px] text-[#444]">
      <Fit className="ml-[19px] w-[40px]">Fichier</Fit>
      <div className="ml-[24px] h-[30px] border-b-2 border-[#3d52b8]">
        <Fit className="w-[45px] font-semibold text-[#222]">Accueil</Fit>
      </div>
      <Fit className="ml-[23px] w-[54px]">Insertion</Fit>
      <Fit className="ml-[25px] w-[82px]">Mise en page</Fit>
      <Fit className="ml-[25px] w-[66px]">Références</Fit>
      <Fit className="ml-[24px] w-[51px]">Révision</Fit>
      <Fit className="ml-[24px] w-[58px]">Affichage</Fit>
      <Fit className="ml-[24px] w-[28px]">Aide</Fit>
      <div className="ml-[105px] mt-[4px] flex h-6 w-[34px] shrink-0 items-center justify-center rounded-[3px] border border-[#cfcfcf] bg-white">
        <Svg box="0 0 14 14" className="h-[14px] w-[14px]"><path d="M.7.700h12.600v9.300H6.500L3.500 13v-3H.700z" strokeWidth="1.200" /></Svg>
      </div>
      <div className="ml-[8px] mt-[4px] flex h-6 w-[50px] shrink-0 items-center rounded-[3px] border border-[#cfcfcf] bg-white">
        <Svg box="0 0 16 16" className="ml-[8px] h-4 w-4"><path d="M1 15l1.500-5L12 1q2-1 3 0t0 3L5.500 13.500zM10.500 2.500l3 3M2.500 10l3.500 3.500" strokeWidth="1.200" /></Svg>
        <Chevron className="ml-[4px] h-[10px] w-[10px]" />
      </div>
      <div className="ml-[8px] mt-[4px] flex h-6 w-[99px] shrink-0 items-center rounded-[3px] bg-[#3d52b8] text-[12px] leading-5 text-white">
        <Svg box="0 0 16 16" className="ml-[8px] h-4 w-4"><path d="M4 4.500H1v11h11.500v-3M10 1l5 4.500-5 4.500V7.500Q6 7.500 4.500 11 5 4 10 3.500z" strokeWidth="1.200" /></Svg>
        <Fit className="ml-[5px] w-[45px]">Partager</Fit>
        <Chevron className="ml-[5px] h-[10px] w-[10px]" />
      </div>
    </div>
  );
}

const Tiny = () => <Chevron className="h-[7px] w-[7px]" />;
const Launcher = ({ className = "" }: { className?: string }) => (
  <Svg box="0 0 8 8" className={`h-[8px] w-[8px] ${className}`}><path d="M.5 8V.500H7.500M3 3l4 4M7.500 3.500v4h-4" strokeWidth="1" /></Svg>
);
const Split = () => <span className="h-[92px] w-px shrink-0 bg-[#c8c8c8]" />;

function BigGroup({ width, textW, labelW, icon, text, label, launcher }: {
  width: string; textW: string; labelW: string; icon: ReactNode; text: string; label: string; launcher?: boolean;
}) {
  return (
    <div className={`relative flex h-[92px] shrink-0 flex-col items-center ${width}`}>
      <div className="flex h-[38px] items-center pt-[4px]">{icon}</div>
      <Fit className={`mt-[1px] text-[12px] leading-4 ${textW}`}>{text}</Fit>
      <div className="mt-[5px]"><Tiny /></div>
      <div className="mt-[10px] flex h-[14px] items-center gap-[4px]">
        <Fit className={`text-[10px] leading-[14px] text-[#555] ${labelW}`}>{label}</Fit>
        {launcher && <Launcher className="mt-[4px]" />}
      </div>
    </div>
  );
}

function Ribbon() {
  return (
    <div className="relative z-10 mx-[8px] flex h-[100px] w-[908px] shrink-0 rounded-[8px] bg-white pt-[4px] font-['Open_Sans',sans-serif] text-[#333] shadow-[0_1px_3px_rgba(0,0,0,0.22)]">
      <div className="flex w-[51px] flex-col">
        <Svg box="0 0 16 18" className="ml-[14px] mt-[13px] h-[17px] w-[16px] text-[#333]"><path d="M1.500 1v6.500H8M2 7C5 1 14 1 14 8c0 4-4 6-6 8.500" strokeWidth="1.400" /></Svg>
        <Svg box="0 0 16 18" className="ml-[14px] mt-[12px] h-[17px] w-[16px] text-[#b8b8b8]"><path d="M14.500 1v6.500H8M14 7C11 1 2 1 2 8c0 4 4 6 6 8.500" strokeWidth="1.400" /></Svg>
        <Fit className="ml-[8px] mt-[18px] w-[34px] text-[10px] leading-[14px] text-[#555]">Annuler</Fit>
      </div>
      <Split />
      <div className="flex w-[88px] flex-col">
        <div className="flex h-[77px]">
          <div className="ml-[12px] flex w-[32px] flex-col items-center">
            <Svg box="0 0 28 30" className="ml-[4px] mt-[4px] h-[30px] w-[28px]">
              <path d="M2 4h20v22H2z" fill="#fbe6a8" stroke="#c98d2e" strokeWidth="1.500" />
              <path d="M5 6h14v18H5z" fill="#f8f8f8" stroke="none" />
              <path d="M7 7V4h2q2-5 5 0h3v3z" fill="#eee" stroke="#666" />
              <path d="M14 12h13v17H14z" fill="#fafafa" strokeWidth="1.300" />
            </Svg>
            <Fit className="mt-[3px] w-[31px] text-[12px] leading-4">Coller</Fit>
            <div className="mt-[5px]"><Tiny /></div>
          </div>
          <div className="ml-[14px] flex flex-col">
            <Svg box="0 0 16 16" className="mt-[4px] h-4 w-4 text-[#b0b0b0]">
              <path d="M4.500 0l6 11M11.500 0l-6 11" strokeWidth="1.200" />
              <g stroke="#9db8dd" strokeWidth="1.200"><circle cx="4.500" cy="13" r="2" /><circle cx="11.500" cy="13" r="2" /></g>
            </Svg>
            <Svg box="0 0 16 16" className="mt-[10px] h-4 w-4 text-[#b8b8b8]"><path d="M6 11H.500V.500h5L8 3M6 4h6l3.500 3.500V15.500H6zM11.500 4v4h4M8 10h5M8 12.500h5" /></Svg>
            <Svg box="0 0 16 16" className="mt-[9px] h-4 w-4">
              <path d="M5 6l6 5-4 4.500Q3 13 .500 9z" fill="#f3b04e" stroke="#b9772a" />
              <path d="M6 5l6 5 1.500-2L10.500 5.500 15.500 2l-1.500-2-5 4L8 3z" fill="#fff" />
            </Svg>
          </div>
        </div>
        <Fit className="ml-[11px] w-[64px] text-[10px] leading-[14px] text-[#555]">Presse-papiers</Fit>
      </div>
      <Split />
      <div className="flex w-[214px] flex-col">
        <div className="ml-[8px] flex h-[24px] w-[179px] shrink-0 items-center rounded-[3px] border border-[#c8c8c8] text-[12px] leading-5">
          <Fit className="ml-[2px] w-[73px]">Calibri (corps)</Fit>
          <span className="ml-[42px]"><Tiny /></span>
          <span className="ml-[2px] h-[22px] w-px bg-[#c8c8c8]" />
          <Fit className="ml-[8px] w-[12px]">12</Fit>
          <span className="ml-[21px]"><Tiny /></span>
        </div>
        <div className="mt-[3px] flex h-[20px] items-center text-[13px] leading-5">
          <Fit className="ml-[17px] w-[10px] font-bold">G</Fit>
          <Fit className="ml-[20px] w-[7px] font-['Liberation_Serif',serif] text-[15px] italic">I</Fit>
          <Fit className="ml-[21px] w-[8px]"><span className="underline underline-offset-2">S</span></Fit>
          <Fit className="ml-[17px] w-[15px]"><span className="line-through">ab</span></Fit>
          <div className="ml-[18px] flex w-[10px] shrink-0 items-center font-semibold">
            x<span className="mt-[9px] text-[8px] leading-none text-[#3a6cc0]">2</span>
          </div>
          <div className="ml-[18px] flex w-[10px] shrink-0 items-center font-semibold">
            x<span className="mb-[11px] text-[8px] leading-none text-[#3a6cc0]">2</span>
          </div>
        </div>
        <div className="mt-[7px] flex h-[20px] items-center">
          <Fit className="ml-[14px] w-[16px] text-[13px] leading-5">Aa</Fit>
          <span className="ml-[6px]"><Tiny /></span>
          <Svg box="0 0 16 16" className="ml-[9px] h-4 w-4">
            <path d="M4 10l1-3 8-6.500 1.500 1.500L8 9.500 5 11z" fill="#ddd" /><path d="M0 12.500h16V16H0z" fill="#f7f23c" stroke="none" />
          </Svg>
          <span className="ml-[6px]"><Tiny /></span>
          <Svg box="0 0 16 16" className="ml-[9px] h-4 w-4">
            <path d="M4 10.500L8 .500l4 10M5.500 7h5" strokeWidth="1.400" /><path d="M0 12.500h16V16H0z" fill="#c63b26" stroke="none" />
          </Svg>
          <span className="ml-[6px]"><Tiny /></span>
          <Svg box="0 0 16 16" className="ml-[10px] h-4 w-4"><path d="M.5 14L5.500 2l5 12M2 10h7" strokeWidth="1.400" /><path d="M11 5l2-2.500L15 5" stroke="#3a6cc0" /></Svg>
          <Svg box="0 0 16 16" className="ml-[13px] h-4 w-4"><path d="M1 14L5 4l4 10M2.500 10.500h5" strokeWidth="1.300" /><path d="M10 2.500l2 2.500 2-2.500" stroke="#3a6cc0" /></Svg>
          <Svg box="0 0 16 16" className="ml-[10px] h-4 w-4"><path d="M.5 12L5 1l4 9M2.500 8h5" strokeWidth="1.300" /><path d="M6 12l5-5 4 4-4.500 4.500H9z" fill="#f1dff8" stroke="#9a4fb8" strokeWidth="1.200" /></Svg>
        </div>
        <Fit className="ml-[94px] mt-[3px] w-[25px] text-[10px] leading-[14px] text-[#555]">Police</Fit>
      </div>
      <Split />
      <div className="flex w-[80px] flex-col items-center">
        <Svg box="0 0 28 22" className="mt-[8px] h-[22px] w-[28px]"><path d="M0 1h28M4 6h20M0 11h28M4 16h20M0 21h28" strokeWidth="1.100" /></Svg>
        <Fit className="mt-[9px] w-[60px] text-[12px] leading-4">Paragraphe</Fit>
        <div className="mt-[5px]"><Tiny /></div>
        <Launcher className="ml-[53px] mt-[14px]" />
      </div>
      <Split />
      <BigGroup width="w-[56px]" textW="w-[30px]" labelW="w-[25px]" text="Styles" label="Styles" launcher icon={
        <Svg box="0 0 28 30" className="ml-[3px] h-[30px] w-[28px]">
          <path d="M1 24L10.500 1.500 17 17M5 15.500h10" strokeWidth="2.200" />
          <path d="M27 10L16 23l-2-2z" fill="#fff" strokeWidth="1.200" />
          <path d="M15 22q2 7-10 6 5-2 5-5t5-1z" fill="#8fb6ee" stroke="#2d56a8" />
        </Svg>} />
      <Split />
      <BigGroup width="w-[57px]" textW="w-[36px]" labelW="w-[30px]" text="Édition" label="Édition" icon={
        <Svg box="0 0 30 30" className="h-[30px] w-[30px]"><circle cx="19" cy="11" r="10" fill="#f8f8f8" strokeWidth="1.100" /><path d="M12 18.500L1 29" strokeWidth="1.200" /></Svg>} />
      <Split />
      <BigGroup width="w-[97px]" textW="w-[31px]" labelW="w-[82px]" text="Dicter" label="Commande vocale" icon={
        <Svg box="0 0 20 30" className="h-[30px] w-[20px]"><rect x="4.500" y=".7" width="11" height="21" rx="5" fill="#9dc0f0" stroke="#3d63b0" /><path d="M1.500 15q0 10 8.500 10t8.500-10M10 25v5" strokeWidth="1.400" stroke="#666" /></Svg>} />
      <Split />
      <BigGroup width="w-[94px]" textW="w-[73px]" labelW="w-[61px]" text="Compléments" label="Compléments" icon={
        <Svg box="0 0 28 28" className="h-[28px] w-[28px] text-[#a84a2c]"><path d="M.700.700h26.600v26.600H.700zM4 4h8.500v8.500H4zM15.500 4H24v8.500h-8.500zM4 15.500h8.500V24H4zM15.500 15.500H24V24h-8.500z" strokeWidth="1.300" /></Svg>} />
      <Split />
      <div className="flex w-[123px]">
        <div className="ml-[9px] flex w-[38px] flex-col items-center">
          <Svg box="0 0 31 30" className="ml-[2px] mt-[5px] h-[30px] w-[31px] text-[#3a4fae]">
            <path d="M18 11h10M16 18h8M12 25h7" strokeWidth="5" strokeLinecap="round" stroke="#4058c0" />
            <path d="M1 29l2-8L18 1l6 4L9 25z" fill="#eef2fd" strokeWidth="1.300" />
            <path d="M18 1l6 4-2 3-6-4z" fill="#4058c0" />
          </Svg>
          <Fit className="mt-[4px] w-[37px] text-[12px] leading-4">Éditeur</Fit>
        </div>
        <div className="ml-[4px] flex w-[62px] flex-col items-center">
          <Svg box="0 0 24 28" className="mt-[6px] h-[28px] w-[24px]">
            <path d="M1 27l2-5 8-10 3 2.500L6 24z" strokeWidth="1.100" />
            <path d="M10 13q-1-4 3-8 5 6 1 10z" fill="#8fb6ee" stroke="#3d63b0" />
            <path d="M15 0v4M8 3l2 2M21 3l-3 3M19 9h4M18 12l3 3" strokeWidth="1.100" />
          </Svg>
          <Fit className="mt-[5px] w-[61px] text-[12px] leading-4">Concepteur</Fit>
          <div className="mt-[5px]"><Tiny /></div>
        </div>
      </div>
      <Split />
      <Chevron className="ml-[19px] mt-[77px] h-[11px] w-[11px]" />
    </div>
  );
}

function HRuler() {
  return (
    <div className="relative flex h-[22px] shrink-0 items-center border-b border-[#d0d0d0] bg-[linear-gradient(90deg,#ebebeb_59px,#fff_59px,#fff_660px,#ebebeb_660px)] pl-[6px] pt-px shadow-[0_1px_3px_rgba(0,0,0,0.2)]">
      {Array.from({ length: 63 }, (_, i) => {
        const k = i - 4;
        return (
          <span key={i} className="flex w-[12px] shrink-0 justify-center font-['Liberation_Serif',serif] text-[11px] leading-none text-[#333]">
            {k === 0 ? null : k % 8 === 0 ? k / 8 : <span className={k % 4 === 0 ? "h-[10px] w-px bg-[#999]" : "h-[6px] w-px bg-[#aaa]"} />}
          </span>
        );
      })}
      <svg viewBox="0 0 12 21" className="absolute left-[53px] top-0 h-[21px] w-[12px]" fill="#fff" stroke="#888">
        <path d="M.5.500h11v3L6 9.500.500 3.500zM.5 15.500V13L6 8l5.500 5v2.500zM.5 16h11v4H.500z" />
      </svg>
      <svg viewBox="0 0 12 21" className="absolute left-[654px] top-0 h-[21px] w-[12px]" fill="#fff" stroke="#888">
        <path d="M7 0v14" strokeWidth="2" /><path d="M.5 20v-3L6 13l5.500 4v3z" />
      </svg>
    </div>
  );
}

function VRuler() {
  return (
    <div className="flex w-[21px] shrink-0 flex-col border-r border-[#e2e2e2] bg-[linear-gradient(180deg,#ececec_236px,#777_236px,#777_238px,#fff_238px)] pt-[136px]">
      {Array.from({ length: 48 }, (_, i) => {
        const k = i - 8;
        return (
          <span key={i} className="flex h-[12px] shrink-0 items-center justify-center pl-[2px] font-['Liberation_Serif',serif] text-[11px] leading-none text-[#333]">
            {k % 8 === 0 ? <span className="-rotate-90">{Math.abs(k / 8)}</span> : <span className={k % 4 === 0 ? "h-px w-[10px] bg-[#999]" : "h-px w-[7px] bg-[#aaa]"} />}
          </span>
        );
      })}
    </div>
  );
}

const Wavy = ({ children }: { children: ReactNode }) => (
  <span className="underline decoration-[#c8402e] decoration-wavy decoration-1 underline-offset-[2px]">{children}</span>
);
const Sub = ({ children }: { children: ReactNode }) => (
  <sub className="text-[11px] not-italic leading-none">{children}</sub>
);
/* Upright run (braces, arrows, operators) inside an italic formula. */
const Up = ({ children }: { children: ReactNode }) => <span className="not-italic">{children}</span>;

function Doc() {
  return (
    <div className="flex w-[484px] shrink-0 flex-col overflow-hidden bg-white font-['Lato',sans-serif] text-[16.5px] leading-[20px] text-black">
      <div className="-mt-[2px] ml-[40px] flex h-[20px] shrink-0 items-center">
        <Fit className="w-[79px] font-['Liberation_Serif',serif]">{"{"}<i>B</i>{"}"}⟶{"{"}<i>C</i>{"}"}</Fit>
        <Fit className="ml-[5px] w-[24px]">and</Fit>
        <Fit className="ml-[5px] w-[80px] font-['Liberation_Serif',serif]">{"{"}<i>B</i>{"}"}⟶{"{"}<i>D</i>{"}"}</Fit>
        <Fit className="ml-[4px] w-[33px]"><Wavy>hold</Wavy>.</Fit>
      </div>
      <div className="mt-[101px] h-[21px] shrink-0 border-y border-[#c9c9c9] bg-[#f3f3f3]" />
      <Fit className="ml-[39px] mt-[98px] w-[160px] text-[17px] font-bold">4 – <Wavy>Attribute</Wavy> Closure</Fit>
      <div className="ml-[40px] mt-[12px] font-['Liberation_Serif',serif] text-[16px] italic text-[#111]">
        <Fit className="h-[20px] w-[439px]">A <Up>={"{"}</Up>CustomerId,  Name,  ZIPCode,  City,  Phone,  OrderID,</Fit>
        <Fit className="h-[20px] w-[445px]">F<Sub>1</Sub> <Up>={"{{"}</Up>CustomerID<Up>{"}"}⟶{"{"}</Up>Name,  ZIPCode,  City,  Phone<Up>{"}"}, {"{"}</Up>Z.</Fit>
        <Fit className="h-[19px] w-[445px]">F<Sub>2</Sub> <Up>={"{{"}</Up>OrderID<Up>{"}"}⟶{"{"}</Up>CustomerID,  Description,  Amount,  <Up>Pr</Up> i</Fit>
        <Fit className="h-[19px] w-[82px]">F <Up>=</Up> F<Sub>1</Sub> <Up>∪</Up> F<Sub>2</Sub></Fit>
      </div>
      <Fit className="ml-[63px] mt-[-2px] w-[13px]">a)</Fit>
      <Fit className="ml-[40px] mt-[12px] w-[207px] font-['Liberation_Serif',serif] text-[16px] italic text-[#111]">α <Up>={"{"}</Up>CustomerID,  OrderID<Up>{"}"}</Up></Fit>
      <div className="ml-[63px] mt-[9px] flex shrink-0">
        <Fit className="w-[12px]">1.</Fit>
        <Fit className="ml-[14px] mt-px h-[19px] w-[399px] font-['Liberation_Serif',serif] text-[16px] italic text-[#111]">f<Sub>1</Sub> <Up>={"{"}</Up>CustomerID<Up>{"}"}⟶{"{"}</Up>Name,  ZIPCode,  City,  Phone<Up>{"}"}</Up></Fit>
      </div>
      <div className="ml-[40px] mt-[10px] flex shrink-0">
        <Fit className="mt-px h-[19px] w-[149px] font-['Liberation_Serif',serif] text-[16px] italic text-[#111]"><Up>{"{"}</Up>CustomerID<Up>{"}"}? ⊆</Up> α<Up>:</Up></Fit>
        <Fit className="ml-[3px] w-[27px]"><Wavy>true</Wavy></Fit>
        <Fit className="ml-[4px] w-[17px]">{"=>"}</Fit>
      </div>
      <Fit className="ml-[63px] mt-[10px] w-[12px]">2.</Fit>
      <Fit className="ml-[63px] mt-[40px] w-[12px]">3.</Fit>
      <Fit className="ml-[63px] mt-[40px] w-[12px]">4.</Fit>
      <Fit className="ml-[63px] w-[13px]">b)</Fit>
      <div className="flex-1" />
      <div className="h-[18px] shrink-0 bg-[#f3f3f3] pl-[38px] pt-[5px]">
        <div className="h-[7px] w-[257px] rounded-full bg-[#767676]" />
      </div>
    </div>
  );
}

const SYMBOLS = ["⟶", "α", "∪", "\\", "⊆", "π", "∀", "⟺", "→", "∈", "⊂", "ℂ", "∧", "¬", "∨", "⋀", "⟷", "σ", "ρ", "⊲"];
const Hole = ({ className = "h-[16px] w-[16px]" }: { className?: string }) => (
  <span className={`shrink-0 border border-dashed border-[#777] ${className}`} />
);

function EquationPanel() {
  return (
    <div className="flex w-[401px] shrink-0 flex-col overflow-hidden border-l border-[#c8c6c8] bg-[#ecebea] pl-[14px] font-['Open_Sans',sans-serif] text-[#2b2b2b]">
      <div className="flex h-[53px] shrink-0 items-center pb-px">
        <Fit className="ml-[2px] w-[131px] text-[15px] font-semibold leading-5">Outils d\'équation</Fit>
        <Cross className="ml-[219px] h-[13px] w-[13px]" sw={1.2} />
      </div>
      <div className="flex h-[44px] w-[372px] shrink-0 items-center rounded-[4px] bg-white pl-[10px] shadow-[0_1px_3px_rgba(0,0,0,0.2)]">
        <Fit className="w-[71px] font-['Liberation_Serif',serif] text-[24px] leading-7">α: = α<span className="font-['DejaVu_Sans',sans-serif] text-[23px] leading-none">∪</span></Fit>
      </div>
      <div className="ml-[2px] mt-[8px] flex h-[32px] w-[159px] shrink-0 items-center justify-center rounded-[2px] bg-[#3d52b8] text-[13.5px] font-semibold leading-5 text-white">
        <Fit className="w-[116px]">Insérer sur la page</Fit>
      </div>
      <div className="ml-[2px] mt-[45px] flex h-[29px] shrink-0 text-[16.5px] leading-[28px]">
        <div className="h-[29px] border-b-[3px] border-[#3d52b8] px-px"><Fit className="w-[63px] font-semibold">Récents</Fit></div>
        <Fit className="ml-[23px] w-[75px]">Symboles</Fit>
        <Fit className="ml-[25px] w-[79px]">Structures</Fit>
      </div>
      <div className="mt-[22px] flex h-[467px] w-[372px] shrink-0 overflow-hidden rounded-[4px] bg-white shadow-[0_1px_3px_rgba(0,0,0,0.25)]">
        <div className="ml-[17px] w-[336px] shrink-0">
          <Fit className="mt-[22px] w-[115px] text-[14.5px] leading-5">Symboles récents</Fit>
          <div className="mt-[11px] grid grid-cols-5 gap-[4px] font-['Liberation_Serif','DejaVu_Sans',sans-serif] text-[20px] leading-none text-[#605e5c]">
            {SYMBOLS.map((s) => <span key={s} className="flex h-16 items-center justify-center bg-[#f3f2f1]">{s}</span>)}
          </div>
          <Fit className="mt-[25px] w-[125px] text-[14.5px] leading-5">Structures récentes</Fit>
          <div className="mt-[11px] grid grid-cols-4 gap-[4px] font-['DejaVu_Sans',sans-serif] text-[20px] leading-none text-[#605e5c] [&>div]:flex [&>div]:h-[96px] [&>div]:items-center [&>div]:justify-center [&>div]:bg-[#f3f2f1]">
            <div><Hole className="mb-[8px] h-[16px] w-[16px]" /><Hole className="ml-[3px] mt-[12px] h-[14px] w-[15px]" /></div>
            <div>∪<Hole className="ml-px mt-[2px] h-[16px] w-[16px]" /></div>
            <div>
              <span className="mb-[4px]">∪</span>
              <span className="ml-px mr-[2px] flex flex-col gap-[3px]"><Hole className="h-[14px] w-[15px]" /><Hole className="h-[14px] w-[15px]" /></span>
              <Hole className="mb-[2px] h-[16px] w-[16px]" />
            </div>
            <div><Hole className="mt-[8px] h-[16px] w-[16px]" /><Hole className="mb-[8px] ml-[3px] h-[14px] w-[15px]" /></div>
          </div>
        </div>
        <span className="ml-[6px] mt-[7px] h-[367px] w-[6px] shrink-0 rounded-full bg-[#767676]" />
      </div>
    </div>
  );
}

function WordWindow() {
  return (
    <div className="relative z-10 flex w-[924px] shrink-0 flex-col rounded-t-[8px] bg-[#f4f4f4] shadow-[0_0_14px_rgba(0,0,0,0.5),-1px_0_0_#8a8a8a]">
      <div className="flex h-[41px] shrink-0 items-center rounded-t-[8px] bg-[#dfe0e5] pt-[7px] font-['Noto_Sans',sans-serif] text-[14px] leading-5 text-[#45484c]">
        <Cloud className="ml-[20px] h-[11px] w-4" />
        <Fit className="ml-[8px] w-[121px]">course - OneDrive</Fit>
        <Cross className="ml-[56px] h-[10px] w-[10px]" sw={1.9} />
        <div className="relative ml-[10px] flex h-[34px] w-[233px] shrink-0 items-center rounded-t-[8px] bg-white">
          <Flare />
          <span className="ml-[12px]"><WordIcon /></span>
          <div className="ml-[8px] w-[169px] overflow-hidden [mask-image:linear-gradient(90deg,#000_140px,transparent_168px)]">
            <Fit className="w-[178px]">serie_7.docx - Microsoft W</Fit>
          </div>
          <Cross className="ml-[7px] h-[10px] w-[10px]" sw={1.9} />
        </div>
        <span className="ml-[11px] flex h-4 w-4 shrink-0 items-center justify-center rounded-[6px] bg-[#55b948] text-white outline outline-1 outline-white"><FaWhatsapp className="h-[13px] w-[13px]" /></span>
        <Fit className="ml-[8px] w-[72px]">WhatsApp</Fit>
        <Cross className="ml-[104px] h-[10px] w-[10px]" sw={1.9} />
        <span className="ml-[10px] h-[20px] w-px bg-[#8d9095]" />
        <Plus className="ml-[16px] h-[12px] w-[12px]" />
        <Chevron className="ml-[66px] h-[11px] w-[11px]" />
        <div className="ml-[28px] flex items-center text-[#5f6267]"><WinButtons /></div>
      </div>
      <AddressBar second />
      <Bookmarks />
      <WordHeader />
      <WordTabs />
      <Ribbon />
      <HRuler />
      <div className="flex h-[710px] shrink-0 overflow-hidden bg-[#f3f3f3]">
        <VRuler />
        <Doc />
        <div className="w-[18px] shrink-0 pl-[6px] pt-[566px]">
          <div className="h-[58px] w-[6px] rounded-full bg-[#767676]" />
        </div>
        <EquationPanel />
      </div>
      <div className="flex h-[25px] shrink-0 items-center border-t border-[#dcdbda] bg-[#f3f2f1] font-['Open_Sans',sans-serif] text-[11px] leading-4 text-[#6b6a69]">
        <Fit className="ml-[21px] w-[65px]">Page 6 sur 6</Fit>
        <Fit className="ml-[18px] w-[49px]">667 mots</Fit>
        <Fit className="ml-[18px] w-[87px]">Français (France)</Fit>
        <Fit className="ml-[19px] w-[185px]">Suggestions de l'éditeur : affichage</Fit>
        <span className="ml-[112px] h-px w-[11px] bg-[#333]" />
        <Fit className="ml-[25px] w-[29px]">100%</Fit>
        <Plus className="ml-[25px] h-[11px] w-[11px] text-[#333]" sw={1.2} />
        <Fit className="ml-[23px] w-[205px]">Envoyer des commentaires à Microsoft</Fit>
      </div>
    </div>
  );
}

export default function App() {
  return (
    <div className="flex h-[1080px] w-[1920px] flex-col overflow-hidden bg-[#8c2b2b]">
      <TopBar />
      <div className="flex min-h-0 flex-1">
        <Dock />
        <PdfWindow />
        <WordWindow />
      </div>
    </div>
  );
}
